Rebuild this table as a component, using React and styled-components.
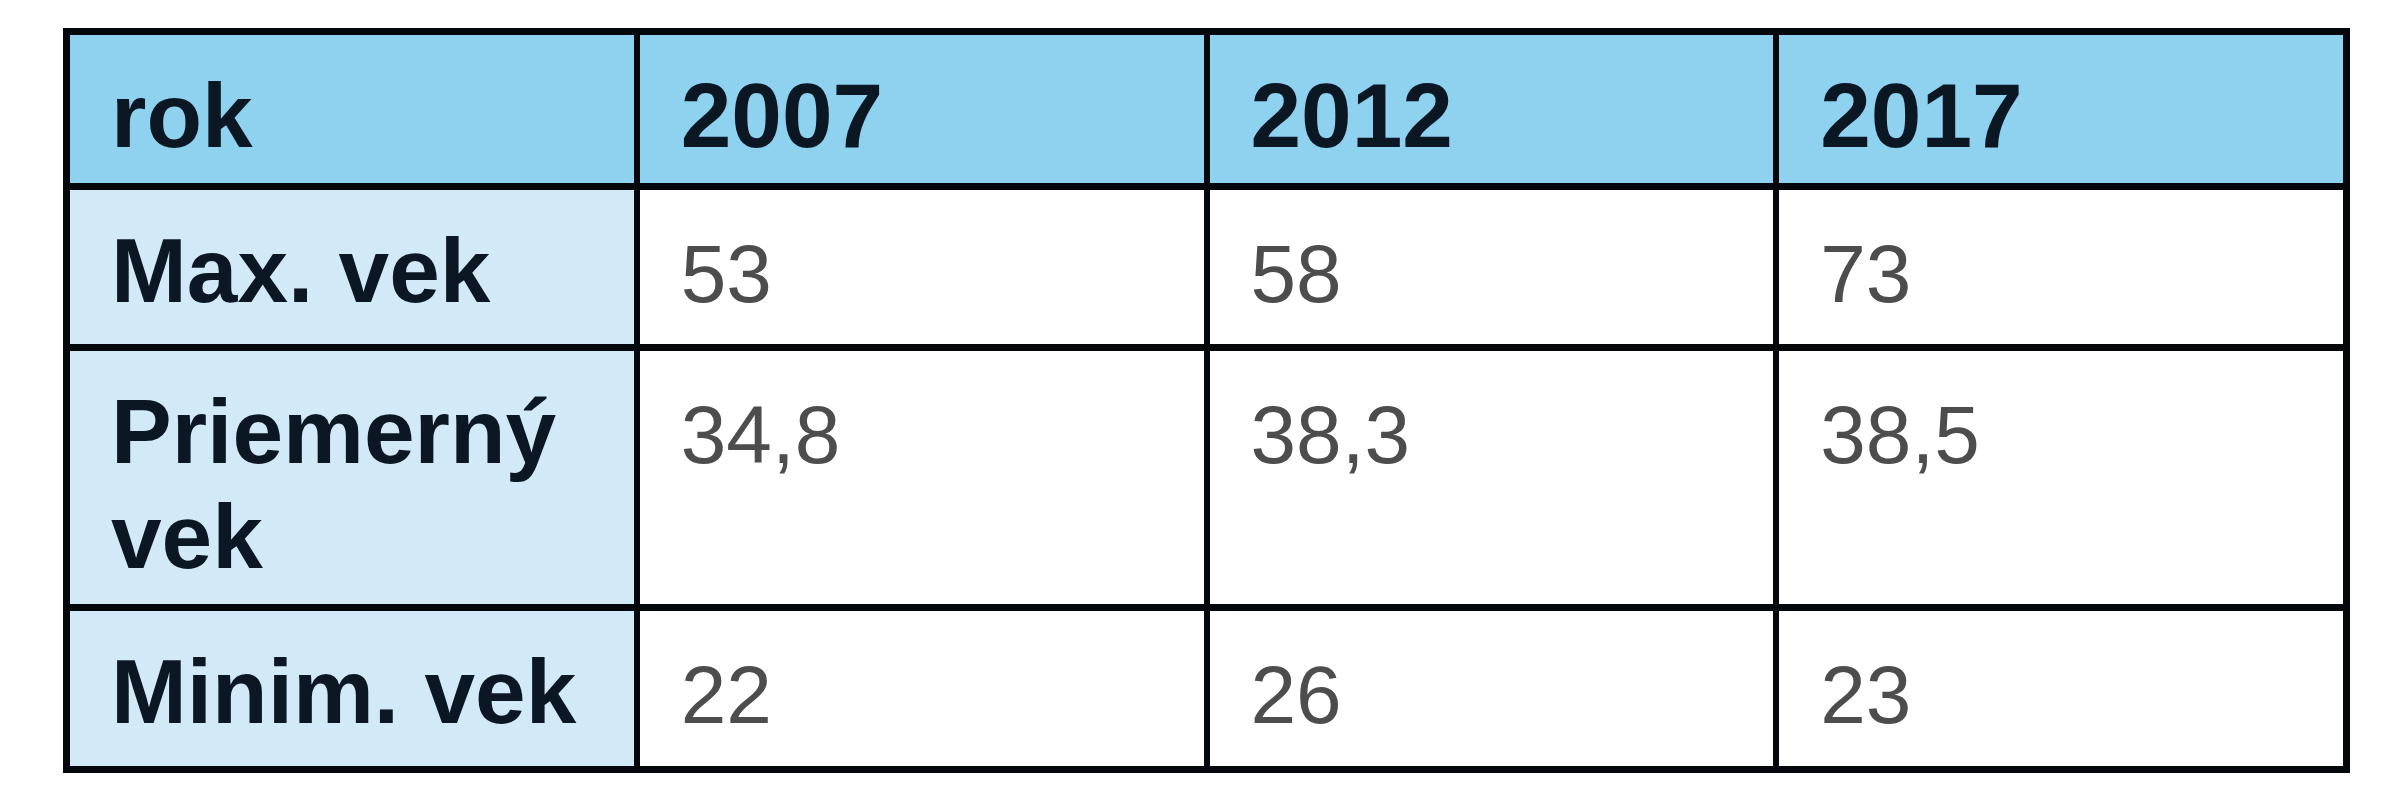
import React from 'react';
import styled, { createGlobalStyle } from 'styled-components';

const GlobalStyle = createGlobalStyle`
  html, body {
    margin: 0;
    padding: 0;
    background: #ffffff;
  }
  body {
    font-family: 'Liberation Sans', Arial, sans-serif;
  }
`;

const Page = styled.div`
  padding: 28px 0 0 63px;
`;

// black background + gaps draw the cell borders
const Grid = styled.div`
  display: grid;
  width: 2287px;
  box-sizing: border-box;
  grid-template-columns: repeat(4, 1fr);
  grid-template-rows: 148px 154px 253px 155px;
  gap: 7px 6px;
  padding: 7px;
  background: #04080c;
`;

const Cell = styled.div`
  box-sizing: border-box;
  padding: 28px 20px 0 41px;
  font-size: 91px;
  line-height: 105px;
  font-weight: 700;
  color: #0b1722;
  background: ${(p) =>
    p.$kind === 'head' ? '#8fd2f0' : p.$kind === 'label' ? '#d2eaf8' : '#ffffff'};
`;

const Value = styled.span`
  font-size: 82px;
  font-weight: 400;
  color: #4d4d4d;
`;

const years = ['2007', '2012', '2017'];

const rows = [
  { label: 'Max. vek', values: ['53', '58', '73'] },
  { label: 'Priemerný vek', values: ['34,8', '38,3', '38,5'] },
  { label: 'Minim. vek', values: ['22', '26', '23'] },
];

export default function App() {
  return (
    <>
      <GlobalStyle />
      <Page>
        <Grid>
          <Cell $kind="head">rok</Cell>
          {years.map((y) => (
            <Cell key={y} $kind="head">
              {y}
            </Cell>
          ))}
          {rows.map((r) => (
            <React.Fragment key={r.label}>
              <Cell $kind="label">{r.label}</Cell>
              {r.values.map((v, i) => (
                <Cell key={i}>
                  <Value>{v}</Value>
                </Cell>
              ))}
            </React.Fragment>
          ))}
        </Grid>
      </Page>
    </>
  );
}
